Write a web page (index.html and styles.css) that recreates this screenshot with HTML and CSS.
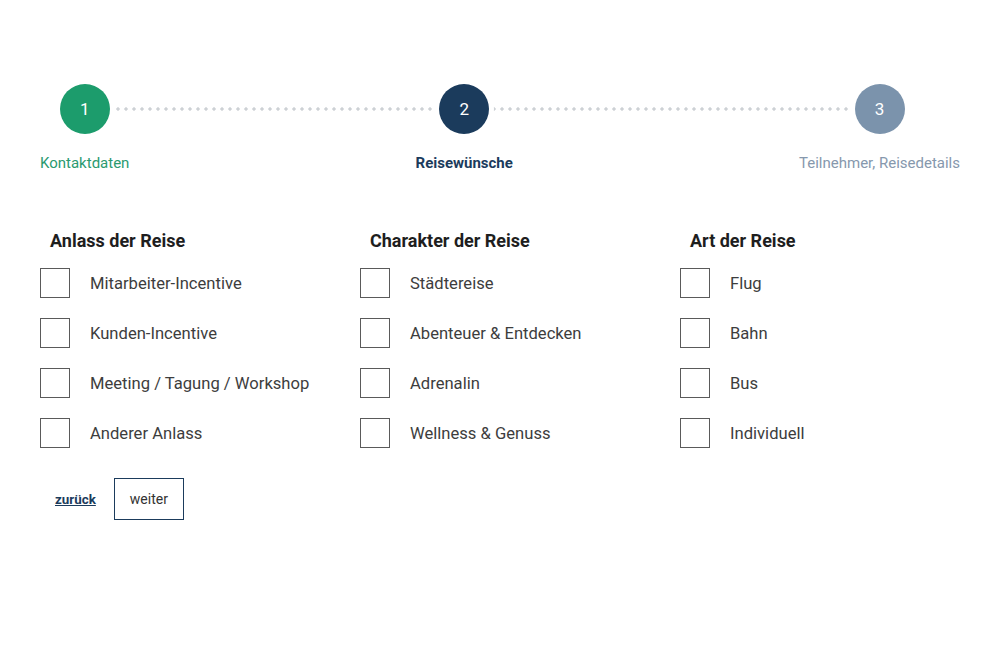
FILE: index.html
```html
<!DOCTYPE html>
<html lang="de">
<head>
<meta charset="utf-8">
<title>Reisewünsche</title>
<link rel="stylesheet" href="styles.css">
</head>
<body>
<main class="page">
  <ol class="stepper">
    <li class="step step-done">
      <span class="step-circle">1</span>
      <span class="step-label">Kontaktdaten</span>
    </li>
    <li class="step step-active">
      <span class="step-circle">2</span>
      <span class="step-label">Reisewünsche</span>
    </li>
    <li class="step step-todo">
      <span class="step-circle">3</span>
      <span class="step-label">Teilnehmer, Reisedetails</span>
    </li>
  </ol>

  <form class="form">
    <div class="groups">
      <div class="group" role="group">
        <h3 class="group-title">Anlass der Reise</h3>
        <label class="option"><input type="checkbox" class="box"><span>Mitarbeiter-Incentive</span></label>
        <label class="option"><input type="checkbox" class="box"><span>Kunden-Incentive</span></label>
        <label class="option"><input type="checkbox" class="box"><span>Meeting / Tagung / Workshop</span></label>
        <label class="option"><input type="checkbox" class="box"><span>Anderer Anlass</span></label>
      </div>
      <div class="group" role="group">
        <h3 class="group-title">Charakter der Reise</h3>
        <label class="option"><input type="checkbox" class="box"><span>Städtereise</span></label>
        <label class="option"><input type="checkbox" class="box"><span>Abenteuer &amp; Entdecken</span></label>
        <label class="option"><input type="checkbox" class="box"><span>Adrenalin</span></label>
        <label class="option"><input type="checkbox" class="box"><span>Wellness &amp; Genuss</span></label>
      </div>
      <div class="group" role="group">
        <h3 class="group-title">Art der Reise</h3>
        <label class="option"><input type="checkbox" class="box"><span>Flug</span></label>
        <label class="option"><input type="checkbox" class="box"><span>Bahn</span></label>
        <label class="option"><input type="checkbox" class="box"><span>Bus</span></label>
        <label class="option"><input type="checkbox" class="box"><span>Individuell</span></label>
      </div>
    </div>
    <div class="actions">
      <a class="back" href="#">zurück</a>
      <button type="button" class="next">weiter</button>
    </div>
  </form>
</main>
</body>
</html>
```

FILE: styles.css
```css
* { box-sizing: border-box; }

html, body {
  margin: 0;
  padding: 0;
  background: #ffffff;
}

body {
  font-family: Roboto, "Noto Sans", Arial, sans-serif;
  color: #3a3a3a;
}

.page {
  padding: 84px 40px 0 40px;
}

/* Stepper */
.stepper {
  list-style: none;
  margin: 0;
  padding: 0;
  display: flex;
  justify-content: space-between;
  position: relative;
}

.stepper::before {
  content: "";
  position: absolute;
  left: 74px;
  right: 109px;
  top: 23px;
  height: 4px;
  background-image: radial-gradient(circle, #cdd1d5 1.4px, transparent 1.9px);
  background-size: 8px 4px;
  background-repeat: repeat-x;
}

.step {
  display: flex;
  flex-direction: column;
  align-items: center;
  gap: 19px;
}

.step-circle {
  position: relative;
  z-index: 1;
  width: 50px;
  height: 50px;
  border-radius: 50%;
  display: flex;
  align-items: center;
  justify-content: center;
  color: #ffffff;
  font-size: 17px;
  box-shadow: 0 0 0 5px #ffffff;
}

.step-label {
  font-size: 15px;
  line-height: 20px;
  white-space: nowrap;
}

.step-done .step-circle { background: #1c9c6c; }
.step-done .step-label { color: #2a9a70; }

.step-active .step-circle { background: #1b3b5c; }
.step-active .step-label { color: #1b3b5c; font-weight: 700; }

.step-todo .step-circle { background: #7b93ac; }
.step-todo .step-label { color: #8698ad; }

/* Form */
.form {
  margin-top: 56px;
}

.groups {
  display: grid;
  grid-template-columns: 320px 320px 1fr;
}

.group {
  display: flex;
  flex-direction: column;
  gap: 20px;
}

.group-title {
  margin: 0 0 -5px 0;
  padding: 0 0 0 10px;
  font-size: 18px;
  line-height: 24px;
  font-weight: 700;
  color: #1e1e1e;
}

.option {
  display: flex;
  align-items: center;
  gap: 20px;
  height: 30px;
  font-size: 16.6px;
  color: #3d3d3d;
  cursor: pointer;
}

.box {
  appearance: none;
  -webkit-appearance: none;
  margin: 0;
  width: 30px;
  height: 30px;
  border: 1px solid #5a5a5a;
  background: #ffffff;
  flex: none;
}

.actions {
  margin-top: 30px;
  display: flex;
  align-items: center;
  gap: 18px;
  padding-left: 15px;
}

.back {
  font-size: 13.4px;
  font-weight: 700;
  color: #1b3b5c;
  text-decoration: underline;
}

.next {
  width: 70px;
  height: 42px;
  border: 1px solid #1b3b5c;
  background: #ffffff;
  color: #333333;
  font-family: inherit;
  font-size: 14px;
  padding: 0;
}
```
